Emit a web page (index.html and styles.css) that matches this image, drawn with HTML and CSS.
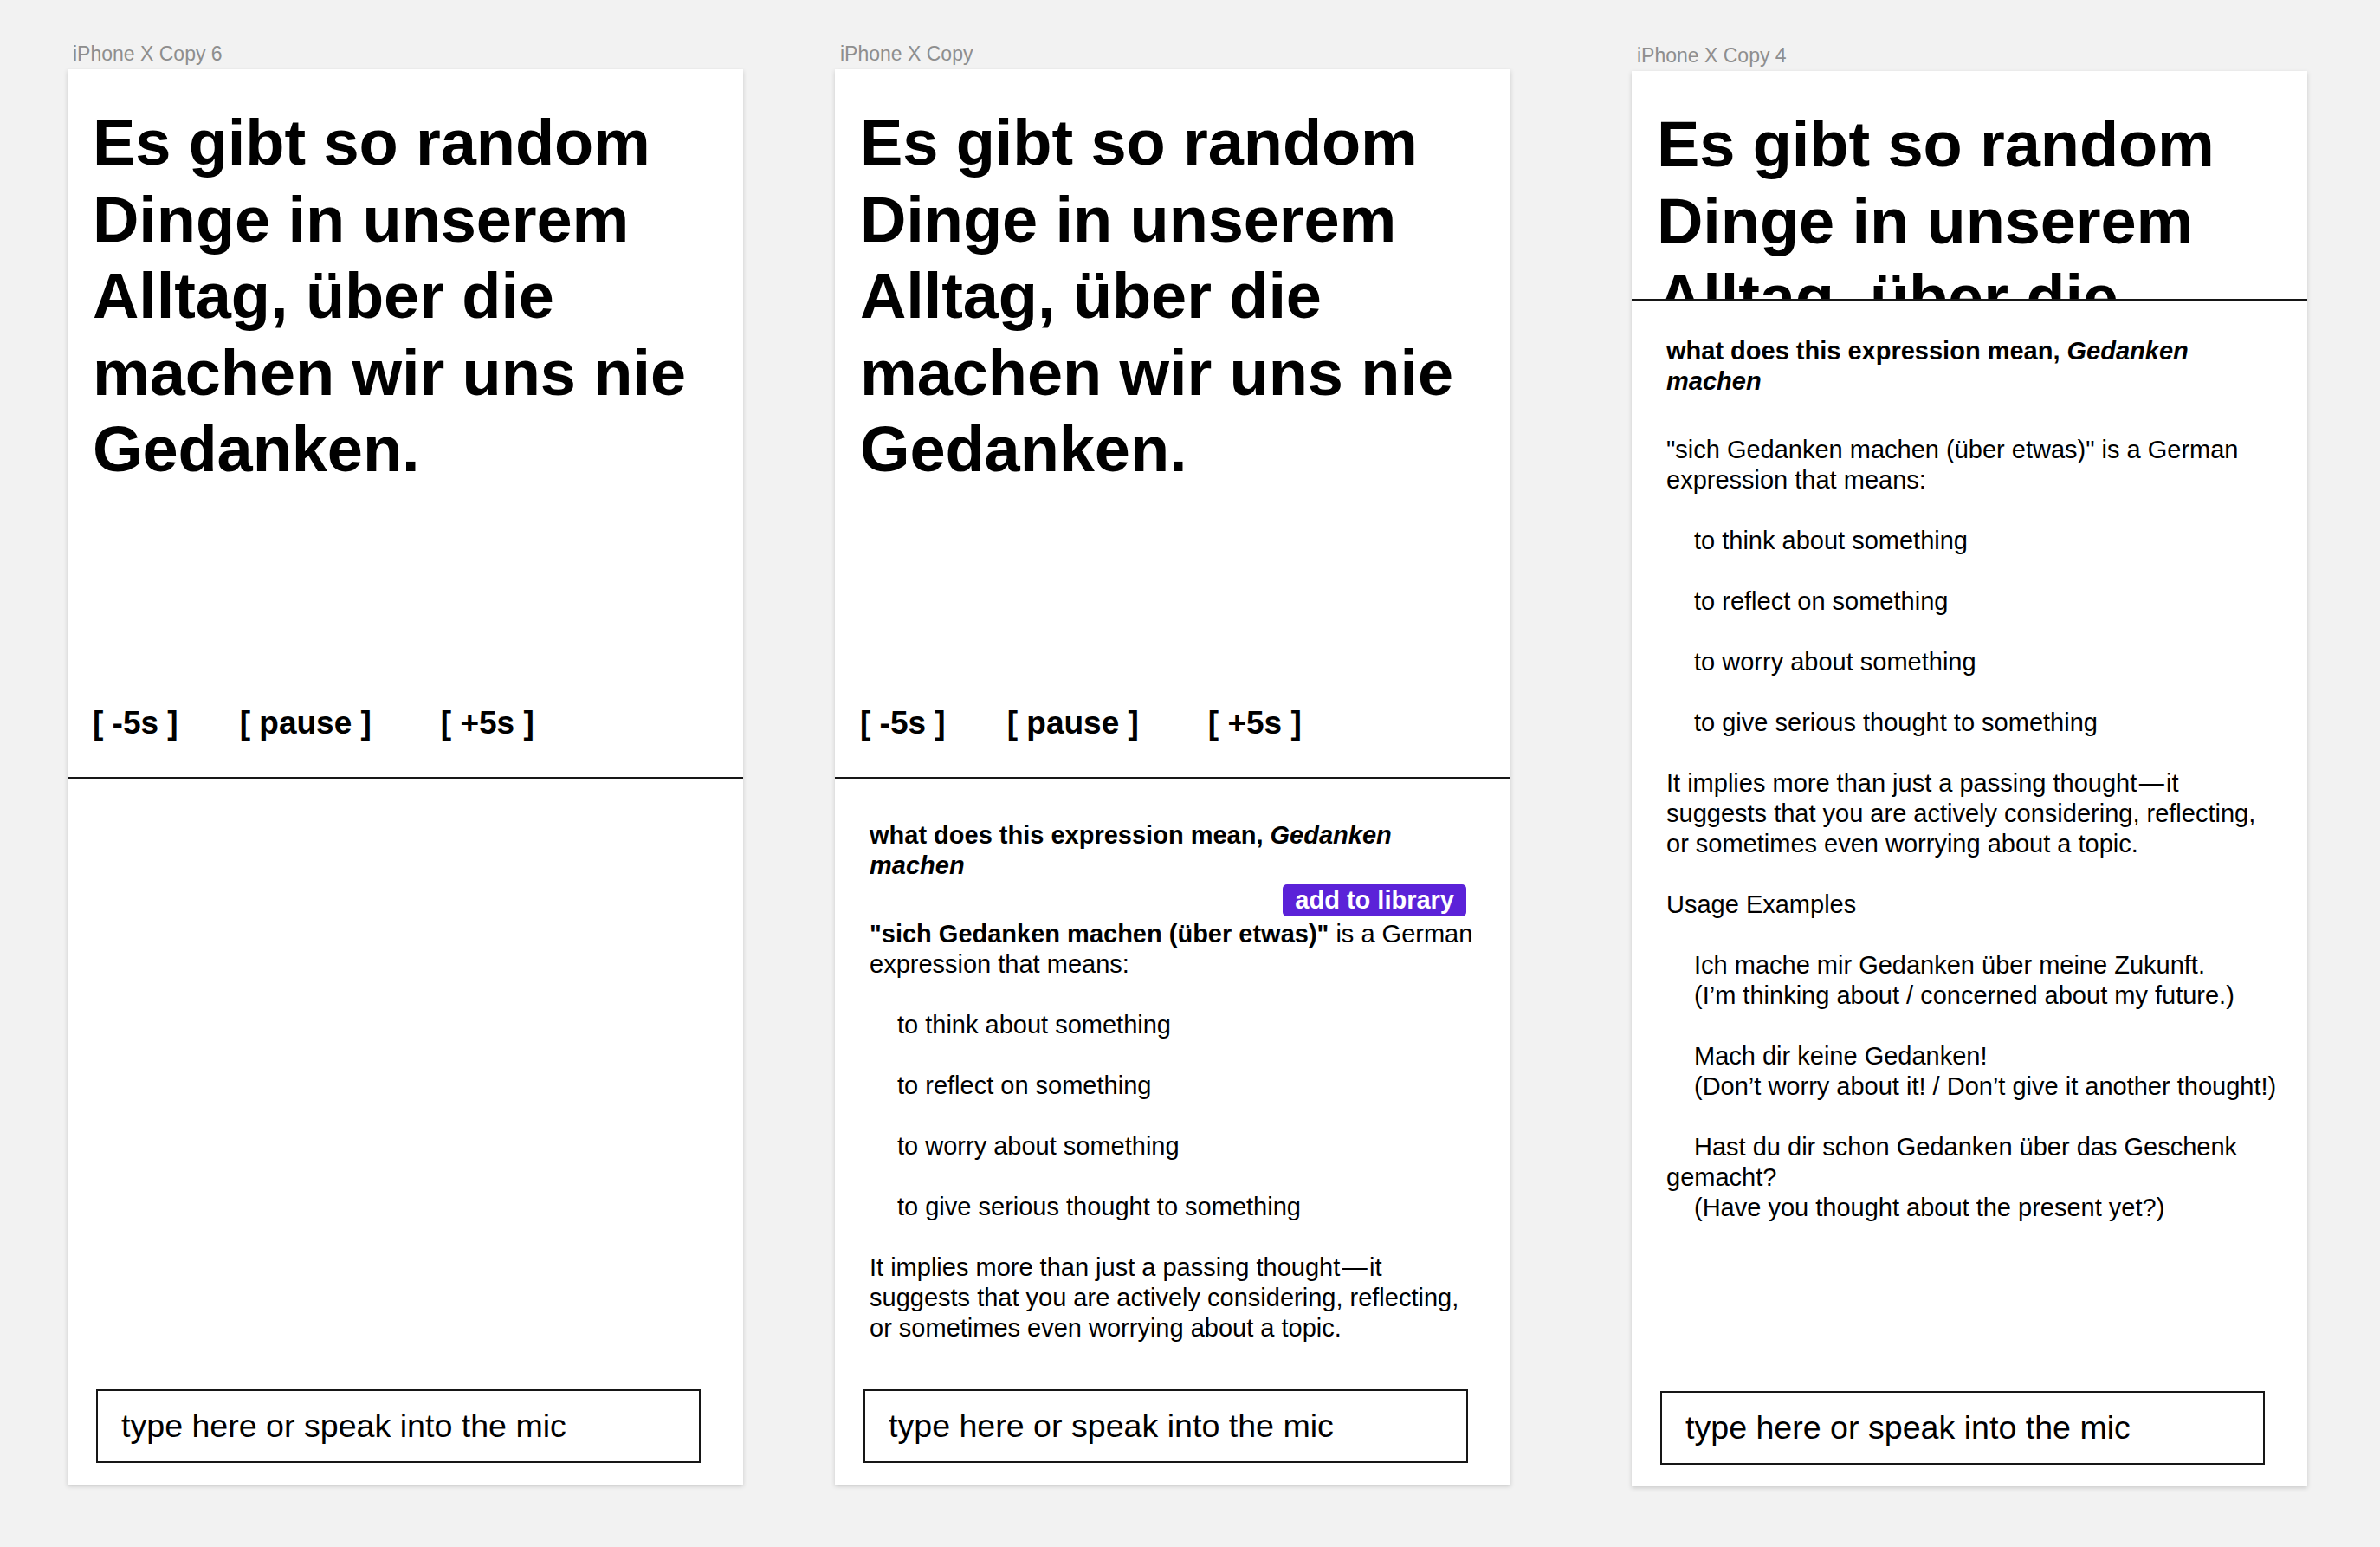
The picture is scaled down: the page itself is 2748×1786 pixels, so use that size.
FILE: index.html
```html
<!DOCTYPE html>
<html lang="de">
<head>
<meta charset="utf-8">
<title>Artboards – Gedanken machen</title>
<link rel="stylesheet" href="styles.css">
</head>
<body>
<main class="canvas">

  <section class="artboard">
    <div class="artboard-label">iPhone X Copy 6</div>
    <div class="screen">
      <div class="player">
        <h1 class="sentence">Es gibt so random Dinge in unserem Alltag, über die machen wir uns nie Gedanken.</h1>
        <div class="controls"><span>[ -5s ]</span><span>[ pause ]</span><span class="ctl-fwd">[ +5s ]</span></div>
      </div>
      <div class="panel">
        <div class="composer">type here or speak into the mic</div>
      </div>
    </div>
  </section>

  <section class="artboard">
    <div class="artboard-label">iPhone X Copy</div>
    <div class="screen">
      <div class="player">
        <h1 class="sentence">Es gibt so random Dinge in unserem Alltag, über die machen wir uns nie Gedanken.</h1>
        <div class="controls"><span>[ -5s ]</span><span>[ pause ]</span><span class="ctl-fwd">[ +5s ]</span></div>
      </div>
      <div class="panel">
        <div class="explain explain-open">
          <p class="question">what does this expression mean, <em>Gedanken machen</em></p>
          <div class="actions"><button class="add-btn" type="button">add to library</button></div>
          <p><strong>"sich Gedanken machen (über etwas)"</strong> is a German expression that means:</p>
          <p class="indent">to think about something</p>
          <p class="indent">to reflect on something</p>
          <p class="indent">to worry about something</p>
          <p class="indent">to give serious thought to something</p>
          <p>It implies more than just a passing thought&#8202;—&#8202;it suggests that you are actively considering, reflecting, or sometimes even worrying about a topic.</p>
        </div>
        <div class="composer">type here or speak into the mic</div>
      </div>
    </div>
  </section>

  <section class="artboard artboard-shifted">
    <div class="artboard-label">iPhone X Copy 4</div>
    <div class="screen">
      <div class="player player-collapsed">
        <h1 class="sentence">Es gibt so random Dinge in unserem Alltag, über die machen wir uns nie Gedanken.</h1>
      </div>
      <div class="panel">
        <div class="explain explain-scrolled">
          <p class="question question-spaced">what does this expression mean, <em>Gedanken machen</em></p>
          <p>"sich Gedanken machen (über etwas)" is a German expression that means:</p>
          <p class="indent">to think about something</p>
          <p class="indent">to reflect on something</p>
          <p class="indent">to worry about something</p>
          <p class="indent">to give serious thought to something</p>
          <p>It implies more than just a passing thought&#8202;—&#8202;it suggests that you are actively considering, reflecting, or sometimes even worrying about a topic.</p>
          <p><span class="underline">Usage Examples</span></p>
          <div class="example">
            <span class="line">Ich mache mir Gedanken über meine Zukunft.</span>
            <span class="line">(I’m thinking about / concerned about my future.)</span>
          </div>
          <div class="example">
            <span class="line">Mach dir keine Gedanken!</span>
            <span class="line">(Don’t worry about it! / Don’t give it another thought!)</span>
          </div>
          <div class="example">
            <span class="line">Hast du dir schon Gedanken über das Geschenk gemacht?</span>
            <span class="line">(Have you thought about the present yet?)</span>
          </div>
        </div>
        <div class="composer">type here or speak into the mic</div>
      </div>
    </div>
  </section>

</main>
</body>
</html>
```

FILE: styles.css
```css
* {
  box-sizing: border-box;
}

html,
body {
  margin: 0;
  padding: 0;
  background: #f2f2f2;
}

body {
  width: 2748px;
  height: 1786px;
  overflow: hidden;
  font-family: "Liberation Sans", Arial, Helvetica, sans-serif;
  color: #000;
}

.canvas {
  display: flex;
  align-items: flex-start;
  gap: 106px;
  padding: 49px 0 0 78px;
}

.artboard {
  width: 780px;
  flex: 0 0 780px;
}

.artboard-shifted {
  margin-left: 34px;
  margin-top: 2px;
}

.artboard-label {
  height: 27px;
  margin-bottom: 4px;
  padding-left: 6px;
  font-size: 23px;
  line-height: 27px;
  color: #8e8e8e;
  white-space: nowrap;
}

.screen {
  height: 1634px;
  background: #fff;
  box-shadow: 0 2px 5px rgba(0, 0, 0, 0.16);
  display: flex;
  flex-direction: column;
}

/* top: sentence + playback controls */
.player {
  height: 819px;
  flex: 0 0 auto;
  padding: 41px 40px 41px 29px;
  border-bottom: 2px solid #161616;
  display: flex;
  flex-direction: column;
  justify-content: space-between;
  overflow: hidden;
}

.player-collapsed {
  height: 265px;
  justify-content: flex-start;
}

.sentence {
  margin: 0;
  flex-shrink: 0;
  font-size: 74px;
  line-height: 88.6px;
  font-weight: 700;
  letter-spacing: -0.1px;
}

.controls {
  display: flex;
  gap: 71px;
  flex-shrink: 0;
  font-size: 37px;
  line-height: 42px;
  font-weight: 700;
  white-space: pre;
}

.ctl-fwd {
  margin-left: 9px;
}

/* bottom: explanation + composer */
.panel {
  flex: 1 1 auto;
  display: flex;
  flex-direction: column;
  min-height: 0;
}

.explain {
  padding: 0 32px 0 40px;
  font-size: 29px;
  line-height: 35px;
}

.explain-open {
  padding-top: 48px;
}

.explain-scrolled {
  padding-top: 41px;
}

.explain p {
  margin: 0 0 35px;
}

.explain p:last-child {
  margin-bottom: 0;
}

.explain .question {
  margin: 0;
  font-weight: 700;
}

.explain .question-spaced {
  margin-bottom: 44px;
}

.question em {
  font-style: italic;
}

.indent,
.line {
  text-indent: 32px;
}

.line {
  display: block;
}

.example {
  margin-bottom: 35px;
}

.example:last-child {
  margin-bottom: 0;
}

.underline {
  text-decoration: underline;
  text-decoration-thickness: 1px;
  text-underline-offset: 3px;
}

.actions {
  height: 44px;
  display: flex;
  justify-content: flex-end;
  align-items: center;
  padding-right: 19px;
}

.add-btn {
  height: 37px;
  padding: 0 14px;
  border: 0;
  border-radius: 5px;
  background: #5b22d8;
  color: #fff;
  font-family: "Liberation Sans", Arial, Helvetica, sans-serif;
  font-size: 29px;
  line-height: 37px;
  font-weight: 700;
}

.composer {
  margin: auto 0 25px 33px;
  width: 698px;
  height: 85px;
  flex: 0 0 auto;
  border: 2px solid #161616;
  padding-left: 27px;
  display: flex;
  align-items: center;
  font-size: 37.6px;
  line-height: 43px;
  white-space: nowrap;
}
```
